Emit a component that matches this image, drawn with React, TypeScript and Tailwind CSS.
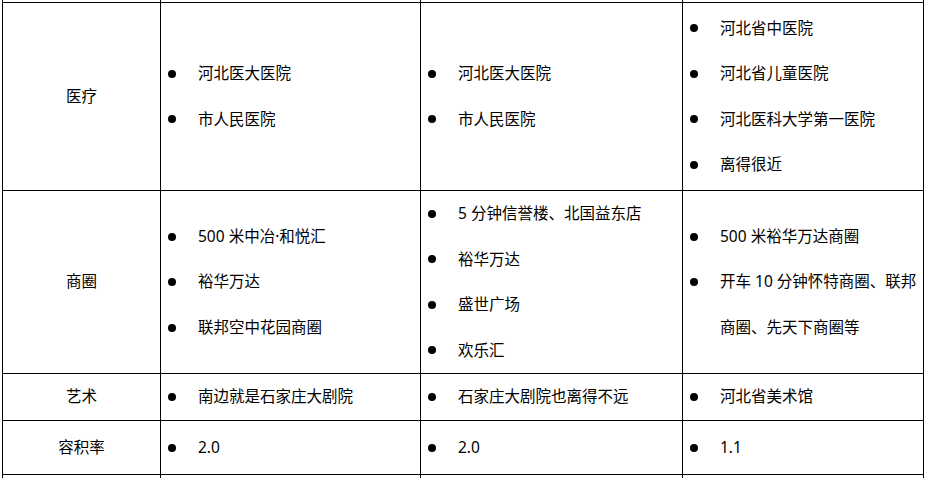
import { Fragment } from "react";

type Item = string | string[];

const rows: { label: string; cols: Item[][] }[] = [
  {
    label: "医疗",
    cols: [
      ["河北医大医院", "市人民医院"],
      ["河北医大医院", "市人民医院"],
      ["河北省中医院", "河北省儿童医院", "河北医科大学第一医院", "离得很近"],
    ],
  },
  {
    label: "商圈",
    cols: [
      ["500 米中冶·和悦汇", "裕华万达", "联邦空中花园商圈"],
      ["5 分钟信誉楼、北国益东店", "裕华万达", "盛世广场", "欢乐汇"],
      ["500 米裕华万达商圈", ["开车 10 分钟怀特商圈、联邦", "商圈、先天下商圈等"]],
    ],
  },
  {
    label: "艺术",
    cols: [["南边就是石家庄大剧院"], ["石家庄大剧院也离得不远"], ["河北省美术馆"]],
  },
  {
    label: "容积率",
    cols: [["2.0"], ["2.0"], ["1.1"]],
  },
];

function BulletList({ items }: { items: Item[] }) {
  return (
    <ul className="w-full">
      {items.map((item, i) => (
        <li key={i} className="flex items-start">
          <span className="w-[37px] h-[45.5px] shrink-0 pl-[7px] flex items-center">
            <span className="w-[8px] h-[8px] rounded-full bg-black" />
          </span>
          <span>
            {Array.isArray(item)
              ? item.map((line, j) => (
                  <span key={j} className="block">
                    {line}
                  </span>
                ))
              : item}
          </span>
        </li>
      ))}
    </ul>
  );
}

export default function App() {
  return (
    <div className="h-[478px] w-[926px] overflow-hidden bg-white">
      <div
        className="ml-[2px] w-[922px] grid grid-cols-[157px_259px_261px_240px] grid-rows-[2px_187px_182px_46px_53px_40px] gap-px bg-black px-px text-[15.5px] leading-[45.5px] text-black"
        style={{ fontFamily: '"Noto Sans", "Noto Sans CJK SC", sans-serif' }}
      >
        {/* cut-off row above */}
        <div className="bg-white" />
        <div className="bg-white" />
        <div className="bg-white" />
        <div className="bg-white" />
        {rows.map((row) => (
          <Fragment key={row.label}>
            <div className="bg-white flex items-center justify-center">{row.label}</div>
            {row.cols.map((items, i) => (
              <div key={i} className="bg-white flex items-center">
                <BulletList items={items} />
              </div>
            ))}
          </Fragment>
        ))}
        {/* cut-off row below */}
        <div className="bg-white" />
        <div className="bg-white" />
        <div className="bg-white" />
        <div className="bg-white" />
      </div>
    </div>
  );
}
